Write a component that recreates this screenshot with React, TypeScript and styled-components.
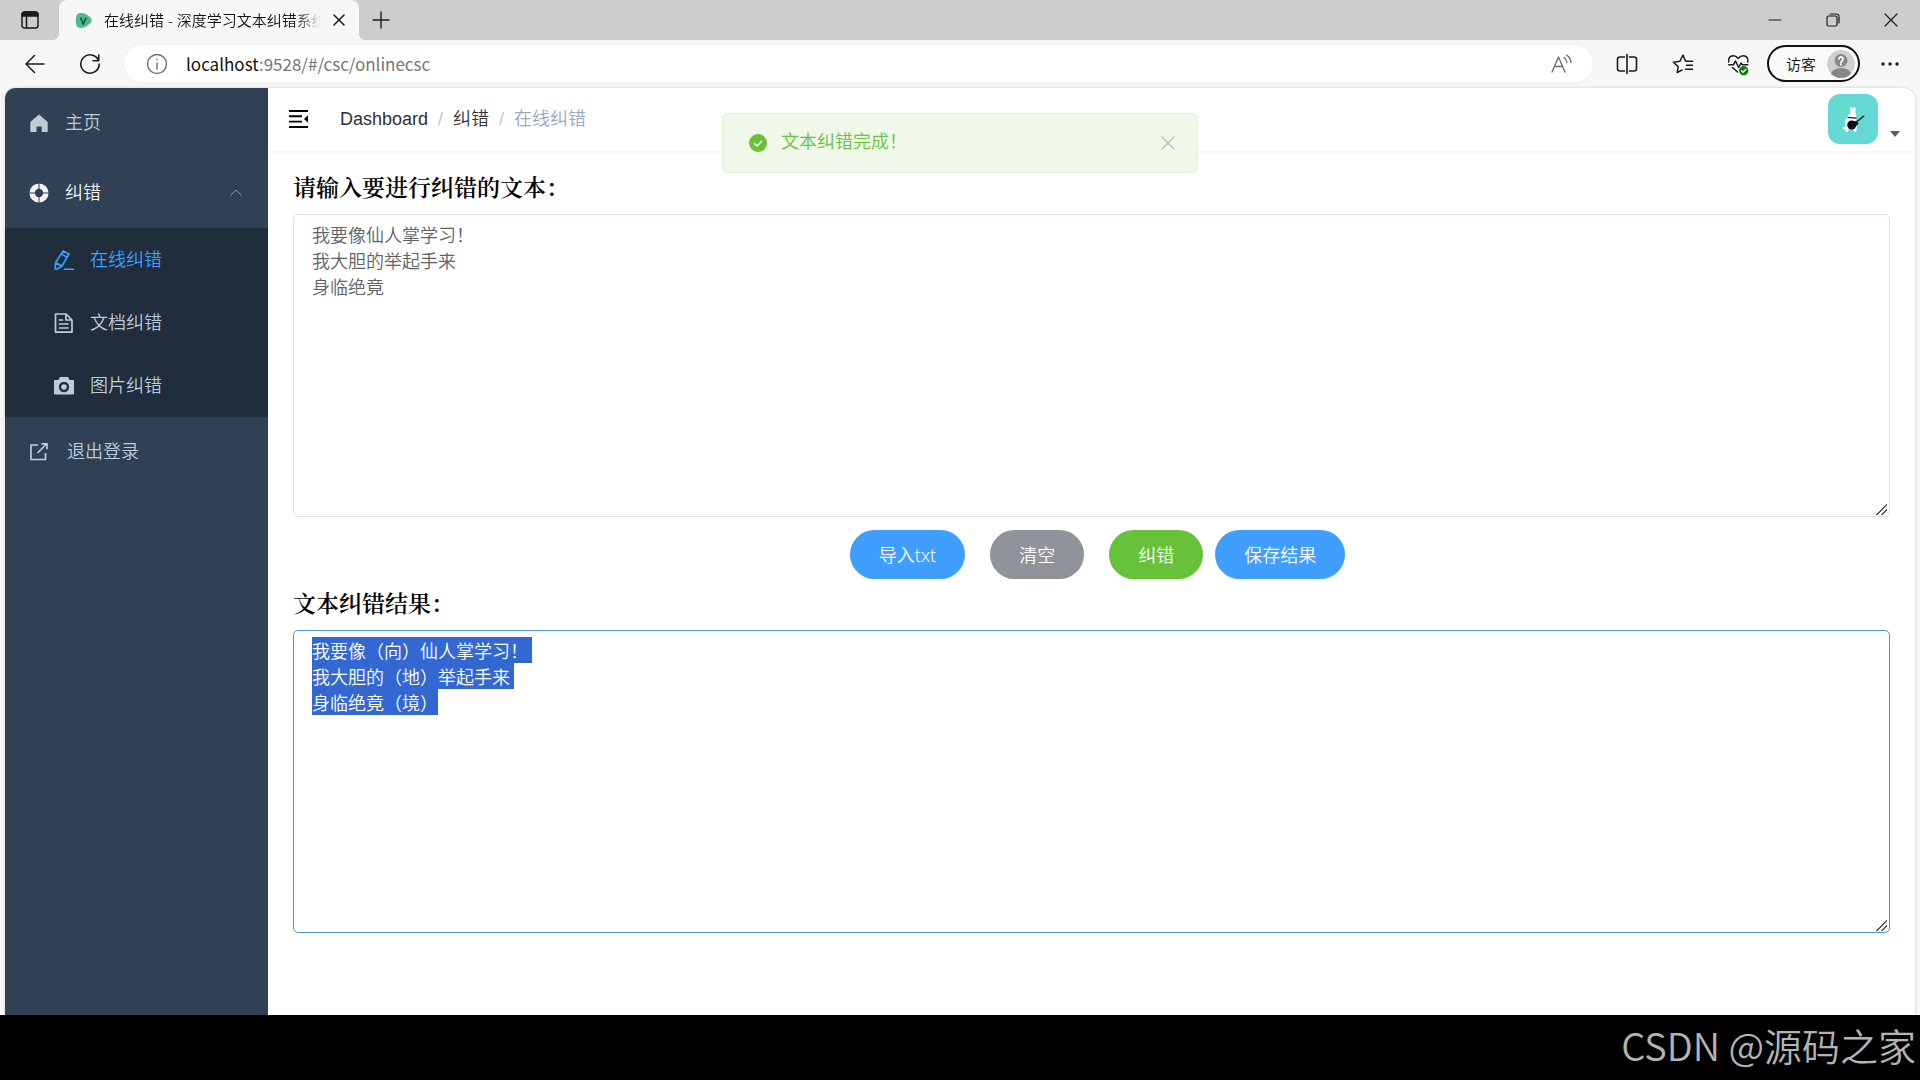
import React, { useEffect, useRef, useState } from "react";
import styled, { createGlobalStyle, css } from "styled-components";

const sans = `"Liberation Sans", "Noto Sans CJK SC", sans-serif`;
const ui = `"Noto Sans", "Noto Sans CJK SC", sans-serif`;

const GlobalStyle = createGlobalStyle`
  *, *::before, *::after { box-sizing: border-box; }
  body { margin: 0; background: #000; font-family: ${sans}; font-size: 18px; font-weight: 350; }
  button { border: 0; padding: 0; background: none; color: inherit; font: inherit; cursor: pointer; }
  a { color: inherit; text-decoration: none; }
  ul, ol { list-style: none; margin: 0; padding: 0; }
  svg { display: block; flex: none; }
`;

const Screen = styled.div`
  min-height: 100vh;
  display: flex;
  flex-direction: column;
`;

const Browser = styled.div`
  flex: 1;
  display: flex;
  flex-direction: column;
  background: #f7f7f7;
`;

/* ---------- tab strip ---------- */

const TabStrip = styled.div`
  display: flex;
  height: 40px;
  background: #cdcdcd;
  font-family: ${ui};
`;

const ToolButton = styled.button<{ $width: number }>`
  width: ${(p) => p.$width}px;
  flex: none;
  display: flex;
  align-items: center;
  justify-content: center;
  color: #1b1b1b;
`;

const Tab = styled.div`
  position: relative;
  width: 300px;
  display: flex;
  align-items: center;
  gap: 12px;
  padding: 0 14px 0 16px;
  background: #f7f7f7;
  border-radius: 8px 8px 0 0;

  &::before,
  &::after {
    content: "";
    position: absolute;
    bottom: 0;
    width: 6px;
    height: 6px;
  }

  &::before {
    right: 100%;
    background: radial-gradient(circle at 0 0, transparent 6px, #f7f7f7 6px);
  }

  &::after {
    left: 100%;
    background: radial-gradient(circle at 100% 0, transparent 6px, #f7f7f7 6px);
  }
`;

const TabTitle = styled.span`
  flex: 1;
  overflow: hidden;
  white-space: nowrap;
  font-size: 15px;
  line-height: 24px;
  color: #111;
  mask-image: linear-gradient(to right, #000 88%, transparent);
`;

const Spacer = styled.div`
  flex: 1;
`;

/* ---------- address bar ---------- */

const Toolbar = styled.div`
  display: flex;
  align-items: stretch;
  height: 48px;
  padding: 5px 0 6px 7px;
  font-family: ${ui};
`;

const AddressBar = styled.div`
  flex: 1;
  display: flex;
  align-items: center;
  gap: 18px;
  margin: 0 6px 0 7px;
  padding: 0 20px 0 22px;
  border-radius: 19px;
  background: #fff;
  box-shadow: 0 0 4px rgba(0, 0, 0, 0.06);
  color: #6f6f6f;
`;

const Url = styled.span`
  flex: 1;
  font-family: "Noto Sans CJK SC", sans-serif;
  font-size: 17px;
  font-weight: 400;
  line-height: 24px;
  color: #757575;

  b {
    font-weight: 400;
    color: #111;
  }
`;

const Guest = styled.button`
  display: flex;
  align-items: center;
  justify-content: space-between;
  width: 93px;
  padding: 0 3px 0 17px;
  border: 2px solid #111;
  border-radius: 19px;
  background: #fafafa;
  font-size: 15px;
  color: #111;
`;

/* ---------- page ---------- */

const Page = styled.div`
  position: relative;
  flex: 1;
  display: flex;
  margin: 0 5px;
  overflow: hidden;
  border-radius: 10px 12px 0 0;
  background: #fff;
  box-shadow: 0 0 3px rgba(0, 0, 0, 0.2);
`;

const Sidebar = styled.nav`
  width: 263px;
  flex: none;
  background: #304156;
  color: #bfcbd9;
`;

const itemBox = css`
  width: 100%;
  display: flex;
  align-items: center;
  gap: 16px;
  font-size: 18px;
  line-height: 26px;
`;

const MenuItem = styled.a<{ $wide?: boolean }>`
  ${itemBox}
  height: 70px;
  padding: 0 24px;
  gap: ${(p) => (p.$wide ? 18 : 16)}px;
`;

const MenuGroup = styled.button`
  ${itemBox}
  height: 70px;
  padding: 0 26px 0 24px;
  color: #f4f4f5;
`;

const GroupLabel = styled.span`
  flex: 1;
  text-align: left;
`;

const SubMenu = styled.ul`
  background: #1f2d3d;
`;

const SubItem = styled.a<{ $active?: boolean }>`
  ${itemBox}
  height: 63px;
  padding-left: 49px;
  color: ${(p) => (p.$active ? "#409eff" : "#bfcbd9")};
`;

const Main = styled.div`
  flex: 1;
  min-width: 0;
`;

const Navbar = styled.header`
  display: flex;
  align-items: center;
  height: 63px;
  padding: 0 15px 2px 20px;
  box-shadow: 0 1px 4px rgba(0, 21, 41, 0.08);
`;

const Crumbs = styled.ol`
  flex: 1;
  display: flex;
  margin-left: 31px;
  font-size: 18px;
  line-height: 26px;

  li + li::before {
    content: "/";
    margin: 0 10px;
    color: #c0c4cc;
  }
`;

const Crumb = styled.li<{ $last?: boolean }>`
  color: ${(p) => (p.$last ? "#97a8be" : "#303133")};
`;

const UserMenu = styled.button`
  display: flex;
  align-items: flex-end;
  gap: 12px;

  svg:last-child {
    margin-bottom: 7px;
  }
`;

const Editor = styled.main`
  padding: 12px 25px;
`;

const Label = styled.label`
  display: block;
  padding-bottom: 4px;
  font-family: "Noto Serif CJK SC", "Noto Sans CJK SC", serif;
  font-size: 23px;
  font-weight: 600;
  line-height: 47px;
  color: #000;
`;

const TextBox = styled.textarea<{ $focused?: boolean }>`
  display: block;
  width: 100%;
  height: 303px;
  padding: 6px 18px;
  border: 1px solid ${(p) => (p.$focused ? "#4c9bbd" : "#dcdfe6")};
  border-radius: 5px;
  outline: 0;
  resize: vertical;
  background: #fff;
  font-family: "Noto Sans CJK SC", sans-serif;
  font-size: 18px;
  font-weight: 350;
  line-height: 26px;
  color: #606266;

  &::selection {
    background: #3367d1;
    color: #fff;
  }

  &::-webkit-resizer {
    background: linear-gradient(135deg, transparent 47%, #555 47% 56%, transparent 56% 72%, #555 72% 81%, transparent 81%)
      2px 3px / 11px 11px no-repeat;
  }
`;

const Actions = styled.div`
  display: flex;
  justify-content: center;
  gap: 25px;
  margin-top: 13px;
  padding-left: 12px;
`;

const ActionPair = styled.div`
  display: flex;
  gap: 12px;
`;

const tones = { primary: "#409eff", info: "#909399", success: "#67c23a" };

const PillButton = styled.button<{ $tone: keyof typeof tones }>`
  height: 49px;
  padding: 0 29px;
  border-radius: 25px;
  background: ${(p) => tones[p.$tone]};
  font-family: ${ui};
  font-size: 18px;
  line-height: 26px;
  color: #fff;
`;

const Toast = styled.div`
  position: absolute;
  top: 25px;
  left: 0;
  right: 0;
  width: 476px;
  height: 60px;
  margin: 0 auto;
  display: flex;
  align-items: center;
  gap: 14px;
  padding: 0 22px 0 26px;
  border: 1px solid #e1f3d8;
  border-radius: 5px;
  background: #eff8e9;
  font-size: 18px;
  line-height: 26px;
  color: #67c23a;

  p {
    flex: 1;
    margin: 0;
    padding-bottom: 2px;
  }

  button {
    color: #c0c4cc;
  }
`;

const Footer = styled.footer`
  display: flex;
  justify-content: flex-end;
  align-items: center;
  height: 65px;
  padding: 0 4px 6px;
  background: #000;
  font-family: "Noto Sans CJK SC", sans-serif;
  font-size: 38px;
  font-weight: 350;
  line-height: 48px;
  color: #b3b3b3;
`;

/* ---------- icons ---------- */

type LineProps = {
  d: string;
  w?: number;
  h?: number;
  sw?: number;
  children?: React.ReactNode;
};

const Line = ({ d, w = 20, h = 20, sw = 1.5, children }: LineProps) => (
  <svg width={w} height={h} viewBox={`0 0 ${w} ${h}`} fill="none" stroke="currentColor" strokeWidth={sw} strokeLinecap="round" strokeLinejoin="round" aria-hidden="true">
    <path d={d} />
    {children}
  </svg>
);

const TabMenuIcon = () => (
  <Line w={18} h={18} d="M3.500 1h11a2.500 2.500 0 0 1 2.500 2.500v11a2.500 2.500 0 0 1-2.500 2.500h-11A2.500 2.500 0 0 1 1 14.500v-11A2.500 2.500 0 0 1 3.500 1zM5.500 5v12">
    <path d="M1 5V3.500A2.500 2.500 0 0 1 3.500 1h11A2.500 2.500 0 0 1 17 3.500V5z" fill="currentColor" />
  </Line>
);

const Favicon = () => (
  <svg width="17" height="17" viewBox="0 0 17 17" aria-hidden="true">
    <path d="M2 2.500C4.500.3 9 .8 12 2.800c2.800 1.800 4.700 3.800 4.700 5.800 0 2.400-2.700 4-5.200 5.600-3 1.900-7 2.600-9 .8C.2 13 .3 5 2 2.500z" fill="#4fba8a" />
    <path d="M5.500 5.500 8.300 12l2.900-6.500" fill="none" stroke="#1e4d4c" strokeWidth="1.600" />
  </svg>
);

const ReadAloudIcon = () => (
  <Line w={22} h={20} sw={1.4} d="M1 18 7.500 3 14 18M3.500 12.500h8M13 3.500c1.700 1.200 2.700 2.800 3 5M15.500 1c2.600 1.600 4.200 4.200 4.500 7.500" />
);

const SplitIcon = () => (
  <Line w={22} h={22} sw={1.6} d="M8.500 4H4a2.500 2.500 0 0 0-2.500 2.500v9A2.500 2.500 0 0 0 4 18h4.500M13.500 4H18a2.500 2.500 0 0 1 2.500 2.500v9A2.500 2.500 0 0 1 18 18h-4.500M11 1.500v19" />
);

const FavouritesIcon = () => (
  <Line w={22} h={22} sw={1.5} d="M10 17 5.200 19.600 6.200 13.600 1.300 9.200 8 8.200 11 2l2.600 6.200h7M14.500 12.200h6M13.500 16.200h7" />
);

const HealthIcon = () => (
  <svg width="24" height="24" viewBox="0 0 24 24" fill="none" stroke="currentColor" strokeWidth="1.500" strokeLinecap="round" strokeLinejoin="round" aria-hidden="true">
    <path d="M1.800 10C.8 6.500 3 3.700 6 3.700c2.100 0 3.800.9 5.200 2.800 1.400-1.900 3.100-2.800 5.200-2.800 3 0 5.400 2.800 4.400 6.300M1.800 12.800h4.500L8.500 9l3.200 6.500L14 11l1.300 1.800h5.500M5.500 15.500l5 4.500" />
    <circle cx="16.700" cy="18.700" r="4.700" fill="#107c10" stroke="none" />
    <path d="m14.600 18.800 1.500 1.500 2.700-2.900" stroke="#fff" strokeWidth="1.300" />
  </svg>
);

const GuestAvatar = () => (
  <svg width="28" height="28" viewBox="0 0 28 28" aria-hidden="true">
    <clipPath id="guest-clip">
      <circle cx="14" cy="14" r="14" />
    </clipPath>
    <g clipPath="url(#guest-clip)">
      <circle cx="14" cy="14" r="14" fill="#d2d0ce" />
      <circle cx="14" cy="10.500" r="6.500" fill="#8a8886" />
      <ellipse cx="14" cy="24" rx="10" ry="6" fill="#8a8886" />
      <path d="M12 9a2 2 0 1 1 3.200 1.600c-.8.6-1.200.9-1.200 1.900M14 14.200v.6" fill="none" stroke="#fff" strokeWidth="1.700" strokeLinecap="round" />
    </g>
  </svg>
);

const HomeIcon = () => (
  <svg width="20" height="20" viewBox="0 0 20 20" fill="currentColor" aria-hidden="true">
    <path d="M10 1.500 18.700 9v10h-6v-5.500H7.500V19H1.300V9z" />
  </svg>
);

const HelpIcon = () => (
  <svg width="20" height="20" viewBox="0 0 20 20" aria-hidden="true">
    <circle cx="10" cy="10" r="6.900" fill="none" stroke="currentColor" strokeWidth="5.400" />
    <path d="M10 0v6M10 14v6M0 10h6M14 10h6" stroke="#304156" strokeWidth="1" />
  </svg>
);

const EditIcon = () => (
  <Line sw={1.6} d="M9 1 15 4 8 16 2.500 19.500 1.200 18.800 1.500 12.700zM7.300 3.900l5.800 3.300M1.500 12.700 8 16M10.500 19.200h9" />
);

const DocIcon = () => (
  <Line sw={1.7} d="M1.500 1H12l6 6v12.200H1.500zM12 1v6h6M5.500 7h3M5.500 11h8.500M5.500 15h8.500" />
);

const CameraIcon = () => (
  <svg width="20" height="20" viewBox="0 0 20 20" aria-hidden="true">
    <path d="M6 1h8l1.500 3H19q1 0 1 1v12.500q0 1-1 1H1q-1 0-1-1V5q0-1 1-1h3.500z" fill="currentColor" />
    <circle cx="10" cy="11" r="4" fill="none" stroke="#1f2d3d" strokeWidth="2.400" />
  </svg>
);

const ExitIcon = () => (
  <svg width="20" height="20" viewBox="0 0 20 20" fill="none" stroke="currentColor" strokeWidth="1.700" aria-hidden="true">
    <path d="M9 3H2v14.500h14.500V11M8.500 11 17.500 2M12.500 1.800H18v5.500" />
  </svg>
);

const FoldIcon = () => (
  <svg width="21" height="20" viewBox="0 0 21 20" aria-hidden="true">
    <path d="M1 2h19M1 7.300h13M1 12.600h13M1 18h19" stroke="#000" strokeWidth="1.900" />
    <path d="M20 6.200v7.600L16 10z" />
  </svg>
);

const RabbitAvatar = () => (
  <svg width="50" height="50" viewBox="0 0 50 50" role="img" aria-label="用户头像">
    <rect width="50" height="50" rx="12" fill="#65d9d3" />
    <path d="M22.500 19.500 22.300 14q.8-1.500 2-.5l.6 3.500.4-3.500q1.700-1.200 2.300.3L27.400 20q1.500 1.500 1 4l-.6 4 1 6-.8 4h-1.800l-1.500-3.500h-3l-2.200 3.500h-2l.3-3q-2.800 1.500-3-.5 0-1.500 2-2l.3-6 2.400-4.500q.8-2 3-2.500z" fill="#fff" />
    <path d="M19.500 23.300 28.500 24.200M29 27.500l7.200-5.800" stroke="#10141f" strokeWidth="1.200" />
    <circle cx="23.700" cy="31" r="4.500" fill="#0a0d16" />
    <circle cx="27.700" cy="29.300" r="2.400" fill="#0a0d16" />
  </svg>
);

const SuccessIcon = () => (
  <svg width="18" height="18" viewBox="0 0 18 18" aria-hidden="true">
    <circle cx="9" cy="9" r="9" fill="#67c23a" />
    <path d="m5 9.200 3 2.800 5.200-5.300" fill="none" stroke="#fff" strokeWidth="1.500" />
  </svg>
);

/* ---------- app ---------- */

const SOURCE = "我要像仙人掌学习！\n我大胆的举起手来\n身临绝竟";
const RESULT = "我要像（向）仙人掌学习！\n我大胆的（地）举起手来\n身临绝竟（境）";

export default function App() {
  const [source, setSource] = useState(SOURCE);
  const [result, setResult] = useState(RESULT);
  const resultRef = useRef<HTMLTextAreaElement>(null);

  useEffect(() => {
    resultRef.current?.focus({ preventScroll: true });
    resultRef.current?.select();
  }, []);

  return (
    <Screen>
      <GlobalStyle />
      <Browser>
        <TabStrip>
          <ToolButton $width={59} aria-label="标签页菜单"><TabMenuIcon /></ToolButton>
          <Tab>
            <Favicon />
            <TabTitle>在线纠错 - 深度学习文本纠错系统</TabTitle>
            <ToolButton $width={12} aria-label="关闭标签页"><Line w={12} h={12} d="M1 1l10 10M11 1 1 11" /></ToolButton>
          </Tab>
          <ToolButton $width={44} aria-label="新建标签页"><Line w={18} h={18} sw={1.4} d="M9 1v16M1 9h16" /></ToolButton>
          <Spacer />
          <ToolButton $width={58} aria-label="最小化"><Line w={14} h={14} sw={1.2} d="M1 7h12" /></ToolButton>
          <ToolButton $width={58} aria-label="还原"><Line w={14} h={14} sw={1.2} d="M2.500 3h7A1.500 1.500 0 0 1 11 4.500v7A1.500 1.500 0 0 1 9.500 13h-7A1.500 1.500 0 0 1 1 11.500v-7A1.500 1.500 0 0 1 2.500 3zM4 1h6.500A2.500 2.500 0 0 1 13 3.500V10" /></ToolButton>
          <ToolButton $width={58} aria-label="关闭"><Line w={14} h={14} sw={1.2} d="M1 1l12 12M13 1 1 13" /></ToolButton>
        </TabStrip>

        <Toolbar>
          <ToolButton $width={55} aria-label="后退"><Line w={20} h={20} sw={1.5} d="M19 10H1M9.500 1.500 1 10l8.500 8.500" /></ToolButton>
          <ToolButton $width={55} aria-label="刷新"><Line w={22} h={22} sw={1.6} d="M19.500 7.500A9.200 9.200 0 1 0 20.200 11M19.700 2v5.700H14" /></ToolButton>
          <AddressBar>
            <Line w={22} h={22} sw={1.4} d="M11 10v6M11 6.300v.4"><circle cx="11" cy="11" r="9.500" /></Line>
            <Url><b>localhost</b>:9528/#/csc/onlinecsc</Url>
            <ReadAloudIcon />
          </AddressBar>
          <ToolButton $width={56} aria-label="拆分屏幕"><SplitIcon /></ToolButton>
          <ToolButton $width={56} aria-label="收藏夹"><FavouritesIcon /></ToolButton>
          <ToolButton $width={56} aria-label="浏览器概要"><HealthIcon /></ToolButton>
          <Guest>访客<GuestAvatar /></Guest>
          <ToolButton $width={60} aria-label="更多">
            <svg width="18" height="4" viewBox="0 0 18 4" fill="currentColor" aria-hidden="true">
              <circle cx="2" cy="2" r="1.700" /><circle cx="9" cy="2" r="1.700" /><circle cx="16" cy="2" r="1.700" />
            </svg>
          </ToolButton>
        </Toolbar>

        <Page>
          <Sidebar>
            <MenuItem href="#/dashboard"><HomeIcon />主页</MenuItem>
            <MenuGroup aria-expanded="true">
              <HelpIcon />
              <GroupLabel>纠错</GroupLabel>
              <svg width="12" height="8" viewBox="0 0 12 8" fill="none" stroke="#909399" aria-hidden="true"><path d="M.500 6.500 6 1l5.500 5.500" /></svg>
            </MenuGroup>
            <SubMenu>
              <li><SubItem $active href="#/csc/onlinecsc"><EditIcon />在线纠错</SubItem></li>
              <li><SubItem href="#/csc/doccsc"><DocIcon />文档纠错</SubItem></li>
              <li><SubItem href="#/csc/imgcsc"><CameraIcon />图片纠错</SubItem></li>
            </SubMenu>
            <MenuItem $wide href="#/login"><ExitIcon />退出登录</MenuItem>
          </Sidebar>

          <Main>
            <Navbar>
              <button aria-label="折叠菜单"><FoldIcon /></button>
              <Crumbs>
                <Crumb><a href="#/dashboard">Dashboard</a></Crumb>
                <Crumb><a href="#/csc">纠错</a></Crumb>
                <Crumb $last>在线纠错</Crumb>
              </Crumbs>
              <UserMenu aria-label="用户菜单">
                <RabbitAvatar />
                <svg width="10" height="6" viewBox="0 0 10 6" fill="#5a5e66" aria-hidden="true"><path d="M0 0h10L5 6z" /></svg>
              </UserMenu>
            </Navbar>
            <Editor>
              <Label htmlFor="source">请输入要进行纠错的文本：</Label>
              <TextBox id="source" spellCheck={false} value={source} onChange={(e) => setSource(e.target.value)} />
              <Actions>
                <PillButton $tone="primary">导入txt</PillButton>
                <PillButton $tone="info" onClick={() => setSource("")}>清空</PillButton>
                <ActionPair>
                  <PillButton $tone="success">纠错</PillButton>
                  <PillButton $tone="primary">保存结果</PillButton>
                </ActionPair>
              </Actions>
              <Label htmlFor="result">文本纠错结果：</Label>
              <TextBox id="result" ref={resultRef} $focused spellCheck={false} value={result} onChange={(e) => setResult(e.target.value)} />
            </Editor>
          </Main>

          <Toast role="status">
            <SuccessIcon />
            <p>文本纠错完成！</p>
            <button aria-label="关闭提示"><Line w={14} h={14} sw={1.5} d="M1 1l12 12M13 1 1 13" /></button>
          </Toast>
        </Page>
      </Browser>
      <Footer>CSDN @源码之家</Footer>
    </Screen>
  );
}
